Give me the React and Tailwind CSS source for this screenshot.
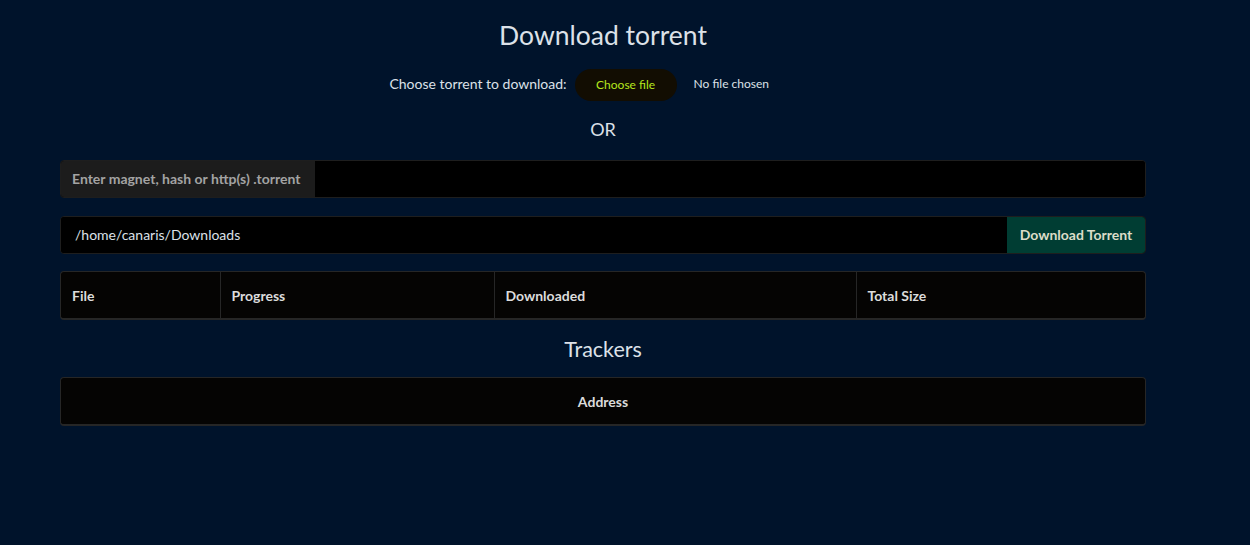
import React, { useState } from 'react';

function App() {
  const [magnet, setMagnet] = useState('');
  const [path, setPath] = useState('/home/canaris/Downloads');
  const [fileName, setFileName] = useState('');

  return (
    <div className="min-h-screen w-full bg-[#00132b] text-[#dde3ea]" style={{ fontFamily: 'Lato, "Open Sans", sans-serif' }}>
      <div className="ml-[60px] w-[1086px] pt-[17px]">
        <h1 className="text-center text-[26.5px] leading-[36px] text-[#dce1e8]">Download torrent</h1>

        {/* file picker */}
        <div className="mt-[16px] flex items-center justify-center">
          <span className="mb-[4px] text-[14px] text-[#dce1e8]">Choose torrent to download:</span>
          <label className="ml-[8px] flex items-center cursor-pointer">
            <span className="flex h-[32px] w-[102px] items-center justify-center rounded-full bg-[#120d02] text-[12px] text-[#b5e61d]">
              Choose file
            </span>
            <span className="mb-[2px] ml-[17px] w-[123px] text-[12px] text-[#dce1e8]">{fileName || 'No file chosen'}</span>
            <input
              type="file"
              accept=".torrent"
              className="hidden"
              onChange={(e) => setFileName(e.target.files[0] ? e.target.files[0].name : '')}
            />
          </label>
        </div>

        <div className="mt-[16px] text-center text-[18px] leading-[24px] text-[#dce1e8]">OR</div>

        {/* magnet input */}
        <div className="mt-[19px] flex h-[38px] overflow-hidden rounded-[4px] border border-[#1e1e1e] bg-black">
          <span className="flex w-[254px] items-center bg-[#1c1c1c] px-[11px] pb-[2px] text-[14px] font-bold text-[#a3a3a3]">
            Enter magnet, hash or http(s) .torrent
          </span>
          <input
            type="text"
            value={magnet}
            onChange={(e) => setMagnet(e.target.value)}
            className="flex-1 bg-black px-3 text-[14px] text-[#dce1e8] outline-none"
          />
        </div>

        {/* path + download */}
        <div className="mt-[18px] flex h-[38px] overflow-hidden rounded-[4px] border border-[#1e1e1e] bg-black">
          <input
            type="text"
            value={path}
            onChange={(e) => setPath(e.target.value)}
            className="flex-1 bg-black px-[14px] pb-[2px] text-[14px] text-[#dce1e8] outline-none"
          />
          <button className="w-[138px] bg-[#003d33] pb-[2px] text-[14px] font-bold text-[#dcdcc8]">Download Torrent</button>
        </div>

        {/* files table */}
        <div className="mt-[17px] overflow-hidden rounded-[4px] border border-b-2 border-[#262626] bg-[#050403]">
          <table className="w-full border-collapse text-left text-[14px]">
            <thead>
              <tr className="h-[46px] font-bold text-[#dcdcdc]">
                <th className="w-[159px] border-r border-[#262626] px-[11px] font-bold">File</th>
                <th className="w-[274px] border-r border-[#262626] px-[11px] font-bold">Progress</th>
                <th className="w-[362px] border-r border-[#262626] px-[11px] font-bold">Downloaded</th>
                <th className="px-[11px] font-bold">Total Size</th>
              </tr>
            </thead>
            <tbody></tbody>
          </table>
        </div>

        <h2 className="mt-[15px] text-center text-[21.5px] leading-[28px] text-[#dce1e8]">Trackers</h2>

        {/* trackers table */}
        <div className="mt-[14px] overflow-hidden rounded-[4px] border border-b-2 border-[#262626] bg-[#050403]">
          <table className="w-full border-collapse text-[14px]">
            <thead>
              <tr className="h-[46px] text-[#dcdcdc]">
                <th className="text-center font-bold">Address</th>
              </tr>
            </thead>
            <tbody></tbody>
          </table>
        </div>
      </div>
    </div>
  );
}

export default App;
